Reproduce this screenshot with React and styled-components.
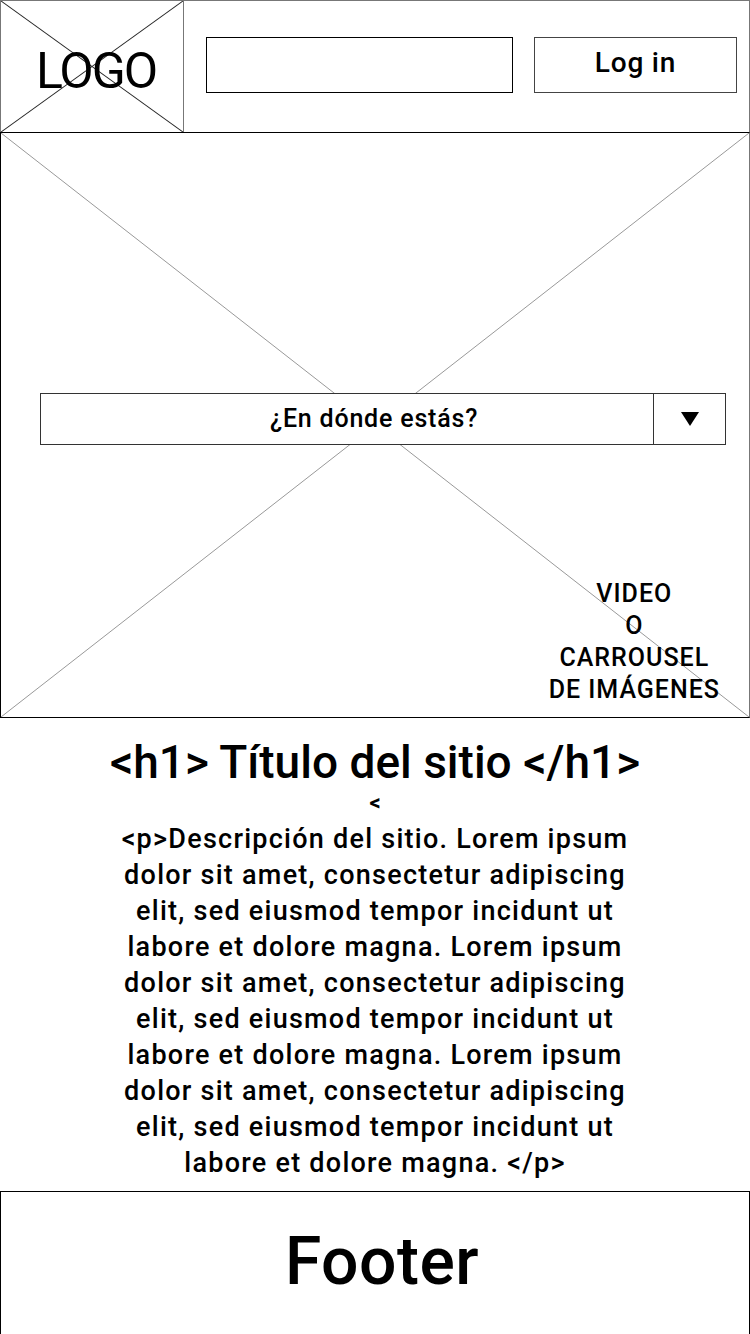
import React from "react";
import styled, { createGlobalStyle } from "styled-components";

const Global = createGlobalStyle`
  html, body { margin: 0; padding: 0; background: #fff; }
  body { font-family: Roboto, "Noto Sans", "DejaVu Sans", sans-serif; color: #000; }
  * { box-sizing: border-box; }
`;

const Page = styled.div`
  width: 750px;
  display: flex;
  flex-direction: column;
`;

const Header = styled.header`
  display: flex;
  height: 132px;
  border: 1px solid #777;
  border-bottom: none;
`;

const Placeholder = styled.svg`
  position: absolute;
  inset: 0;
  width: 100%;
  height: 100%;
  pointer-events: none;
`;

const Cross = ({ color, width }) => (
  <Placeholder viewBox="0 0 100 100" preserveAspectRatio="none">
    <line x1="0" y1="0" x2="100" y2="100" stroke={color} strokeWidth={width} vectorEffect="non-scaling-stroke" />
    <line x1="100" y1="0" x2="0" y2="100" stroke={color} strokeWidth={width} vectorEffect="non-scaling-stroke" />
  </Placeholder>
);

const Logo = styled.div`
  position: relative;
  width: 183px;
  flex: none;
  border-right: 1px solid #777;
  display: flex;
  align-items: center;
  justify-content: center;
  font-size: 50px;
  letter-spacing: -2px;
  padding-top: 8px;
  padding-left: 8px;
`;

const LogoText = styled.span`
  position: relative;
`;

const Controls = styled.div`
  flex: 1;
  display: flex;
  align-items: flex-start;
  gap: 21px;
  padding: 36px 11px 0 22px;
`;

const Search = styled.div`
  width: 307px;
  height: 56px;
  border: 1px solid #000;
`;

const LoginButton = styled.div`
  width: 203px;
  height: 56px;
  border: 1px solid #444;
  display: flex;
  align-items: center;
  justify-content: center;
  font-size: 28px;
  font-weight: 500;
  letter-spacing: 0.8px;
  padding-bottom: 6px;
`;

const Hero = styled.section`
  position: relative;
  height: 586px;
  border: 1px solid #000;
  border-right-color: #777;
  display: flex;
  flex-direction: column;
  padding: 260px 23px 0 39px;
`;

const Select = styled.div`
  position: relative;
  display: flex;
  height: 52px;
  background: #fff;
  border: 1px solid #333;
`;

const SelectLabel = styled.div`
  flex: 1;
  display: flex;
  align-items: center;
  justify-content: center;
  font-size: 25px;
  font-weight: 500;
  letter-spacing: 0.8px;
  padding: 0 0 2px 54px;
`;

const SelectArrow = styled.div`
  width: 72px;
  flex: none;
  border-left: 1px solid #333;
  display: flex;
  align-items: center;
  justify-content: center;
`;

const MediaNote = styled.div`
  position: relative;
  align-self: flex-end;
  margin-top: 133px;
  margin-right: 6px;
  text-align: center;
  font-size: 25px;
  font-weight: 500;
  letter-spacing: 1px;
  line-height: 32px;
`;

const Content = styled.main`
  display: flex;
  flex-direction: column;
  align-items: center;
  padding: 17px 0 10px;
`;

const Title = styled.h1`
  margin: 0;
  font-size: 46px;
  font-weight: 500;
  line-height: 54px;
`;

const Caret = styled.div`
  margin: 4px 0 8px;
  font-size: 22px;
  font-weight: 700;
  line-height: 20px;
`;

const Paragraph = styled.p`
  margin: 0;
  font-size: 27px;
  font-weight: 500;
  letter-spacing: 1.25px;
  line-height: 36px;
  text-align: center;
`;

const Line = styled.span`
  display: block;
  white-space: nowrap;
`;

const Footer = styled.footer`
  height: 150px;
  border: 1px solid #000;
  display: flex;
  justify-content: center;
  padding: 30px 0 0 14px;
  font-size: 66px;
  font-weight: 500;
  letter-spacing: 0.5px;
  line-height: 80px;
`;

const lines = [
  "<p>Descripción del sitio. Lorem ipsum",
  "dolor sit amet, consectetur adipiscing",
  "elit, sed eiusmod tempor incidunt ut",
  "labore et dolore magna. Lorem ipsum",
  "dolor sit amet, consectetur adipiscing",
  "elit, sed eiusmod tempor incidunt ut",
  "labore et dolore magna. Lorem ipsum",
  "dolor sit amet, consectetur adipiscing",
  "elit, sed eiusmod tempor incidunt ut",
  "labore et dolore magna. </p>",
];

export default function App() {
  return (
    <Page>
      <Global />
      <Header>
        <Logo>
          <Cross color="#222" width={1} />
          <LogoText>LOGO</LogoText>
        </Logo>
        <Controls>
          <Search />
          <LoginButton>Log in</LoginButton>
        </Controls>
      </Header>
      <Hero>
        <Cross color="#999" width={1} />
        <Select>
          <SelectLabel>¿En dónde estás?</SelectLabel>
          <SelectArrow>
            <svg width="20" height="16" viewBox="0 0 20 16">
              <polygon points="1,1 19,1 10,15" fill="#000" />
            </svg>
          </SelectArrow>
        </Select>
        <MediaNote>
          VIDEO
          <br />O<br />
          CARROUSEL
          <br />
          DE IMÁGENES
        </MediaNote>
      </Hero>
      <Content>
        <Title>{"<h1> Título del sitio </h1>"}</Title>
        <Caret>{"<"}</Caret>
        <Paragraph>
          {lines.map((l, i) => (
            <Line key={i}>{l}</Line>
          ))}
        </Paragraph>
      </Content>
      <Footer>Footer</Footer>
    </Page>
  );
}
